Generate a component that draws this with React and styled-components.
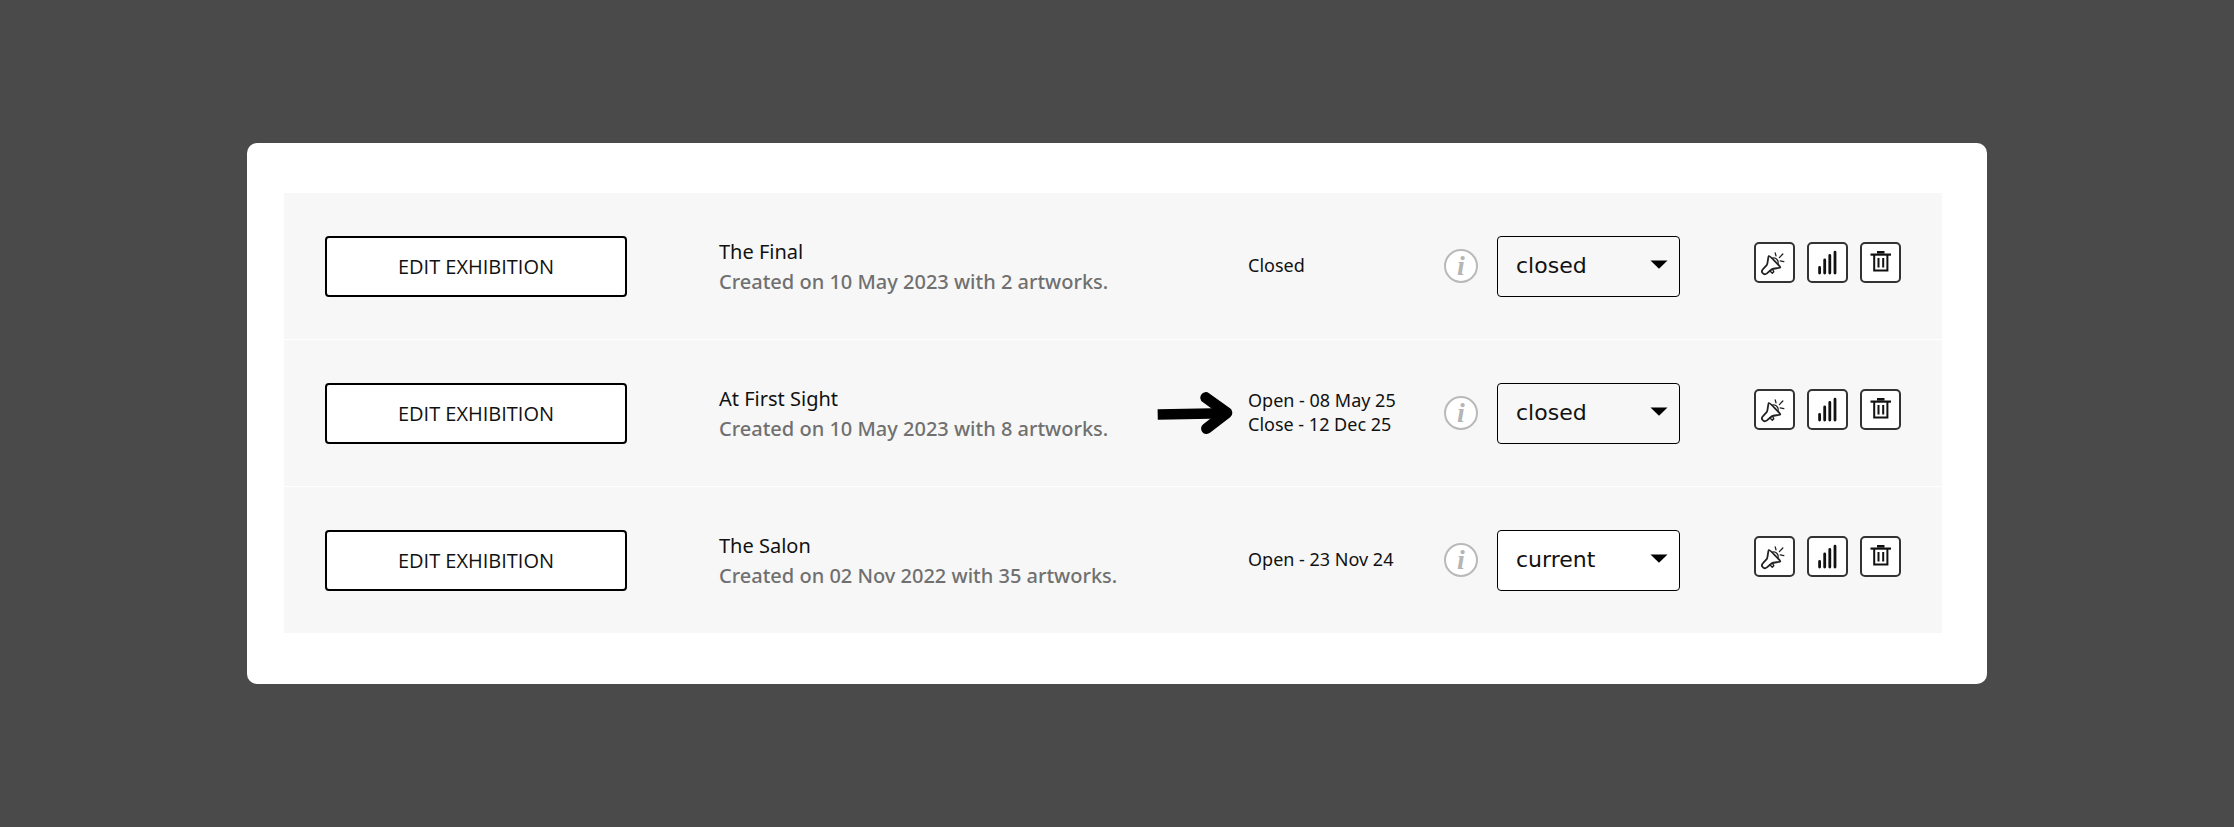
import React, { useState } from "react";
import styled, { createGlobalStyle } from "styled-components";

const exhibitions = [
  {
    id: 1,
    name: "The Final",
    created: "Created on 10 May 2023 with 2 artworks.",
    dates: ["Closed"],
    status: "closed",
  },
  {
    id: 2,
    name: "At First Sight",
    created: "Created on 10 May 2023 with 8 artworks.",
    dates: ["Open - 08 May 25", "Close - 12 Dec 25"],
    status: "closed",
    highlighted: true,
  },
  {
    id: 3,
    name: "The Salon",
    created: "Created on 02 Nov 2022 with 35 artworks.",
    dates: ["Open - 23 Nov 24"],
    status: "current",
  },
];

function ArrowIcon() {
  return (
    <svg width="76" height="46" viewBox="0 0 76 46" fill="none" stroke="#000" aria-hidden="true">
      <path d="M0.7 24.5L68 23.2" strokeWidth="10.5" />
      <path
        d="M48.8 7.6L69.8 22.8L49.6 38.5"
        strokeWidth="11"
        strokeLinecap="round"
        strokeLinejoin="round"
      />
    </svg>
  );
}

function MegaphoneIcon() {
  return (
    <svg
      width="37"
      height="37"
      viewBox="2 2 37 37"
      fill="none"
      stroke="#222"
      strokeWidth="1.8"
      strokeLinecap="round"
      strokeLinejoin="round"
      aria-hidden="true"
    >
      <path d="M14.8 14C15.6 13.6 26.6 24.6 26.3 25.5C26 26.2 19.5 26.3 17.8 27.2L12.9 31.4C11.5 32.5 9.6 32.2 8.6 31C7.6 29.8 7.7 28.3 9 27.1L12.9 22.9C14 20.8 14 14.6 14.8 14Z" />
      <path d="M15.8 28.8L18.3 31.2L19.8 29.7L18.6 27.4" strokeWidth="1.4" />
      <path d="M18.4 16.2C21.6 15 25 18.4 24.2 22" strokeWidth="1.3" />
      <path d="M21.2 10.8L22 13.8M28.8 12L25.4 15.6M26.2 18.8L29.8 19.7" strokeWidth="1.3" />
    </svg>
  );
}

function BarsIcon() {
  return (
    <svg
      width="37"
      height="37"
      viewBox="2 2 37 37"
      fill="none"
      stroke="#111"
      strokeWidth="2.8"
      strokeLinecap="round"
      aria-hidden="true"
    >
      <path d="M12.6 25.4V31M17.7 18V31M22.8 13.4V31M28 10.2V31" />
    </svg>
  );
}

function TrashIcon() {
  return (
    <svg width="37" height="37" viewBox="2 2 37 37" fill="none" stroke="#111" aria-hidden="true">
      <path d="M17 10.3H24.5" strokeWidth="2.6" />
      <path d="M10.5 12.6H31" strokeWidth="2.2" />
      <path d="M14.2 13V28.6H27.4V13" strokeWidth="2" />
      <path d="M18.5 16V25.6M23.2 16V25.6" strokeWidth="2" />
    </svg>
  );
}

function ExhibitionRow({ exhibition }) {
  const [status, setStatus] = useState(exhibition.status);

  return (
    <Row>
      <EditButton type="button">EDIT EXHIBITION</EditButton>
      <Details>
        <h2>{exhibition.name}</h2>
        <p>{exhibition.created}</p>
      </Details>
      <Pointer>{exhibition.highlighted && <ArrowIcon />}</Pointer>
      <Dates>
        {exhibition.dates.map((date) => (
          <span key={date}>{date}</span>
        ))}
      </Dates>
      <InfoButton type="button" aria-label="Status information">
        i
      </InfoButton>
      <SelectWrapper>
        <StatusSelect
          aria-label={exhibition.name + " status"}
          value={status}
          $current={status === "current"}
          onChange={(e) => setStatus(e.target.value)}
        >
          <option value="closed">closed</option>
          <option value="current">current</option>
        </StatusSelect>
        <SelectArrow viewBox="0 0 18 9" aria-hidden="true">
          <path d="M0.5 0.5H17.5L9 8.8Z" fill="#000" />
        </SelectArrow>
      </SelectWrapper>
      <Actions>
        <ActionButton type="button" aria-label="Promote">
          <MegaphoneIcon />
        </ActionButton>
        <ActionButton type="button" aria-label="Statistics">
          <BarsIcon />
        </ActionButton>
        <ActionButton type="button" aria-label="Delete">
          <TrashIcon />
        </ActionButton>
      </Actions>
    </Row>
  );
}

function App() {
  return (
    <Page>
      <GlobalStyle />
      <Card>
        <List>
          {exhibitions.map((exhibition) => (
            <ExhibitionRow key={exhibition.id} exhibition={exhibition} />
          ))}
        </List>
      </Card>
    </Page>
  );
}

export default App;

const GlobalStyle = createGlobalStyle`
  * {
    box-sizing: border-box;
  }
  body {
    margin: 0;
    background: #4a4a4a;
    color: #111;
    font-family: "Noto Sans", "Open Sans", sans-serif;
  }
`;

const Page = styled.main`
  display: flex;
  flex-direction: column;
  justify-content: center;
  min-height: 100vh;
  padding: 0 247px;
`;

const Card = styled.section`
  background: #fff;
  border-radius: 10px;
  padding: 50px 45px 51px 37px;
`;

const List = styled.ul`
  display: flex;
  flex-direction: column;
  gap: 1px;
  margin: 0;
  padding: 0;
  list-style: none;
`;

const Row = styled.li`
  display: grid;
  grid-template-columns: 302px 1fr 76px 211px 34px 202px 221px;
  align-items: center;
  min-height: 146px;
  padding: 0 41px;
  background: #f7f7f7;
`;

const EditButton = styled.button`
  height: 61px;
  border: 2px solid #000;
  border-radius: 4px;
  background: #fff;
  color: #111;
  font-family: "Open Sans", sans-serif;
  font-size: 20px;
  cursor: pointer;
`;

const Details = styled.div`
  padding-top: 2px;
  padding-left: 92px;
  font-size: 20px;
  line-height: 30px;
  h2 {
    margin: 0;
    font-size: inherit;
    font-weight: 400;
  }
  p {
    margin: 0;
    color: #707070;
    font-weight: 500;
  }
`;

const Pointer = styled.div`
  display: flex;
`;

const Dates = styled.div`
  display: flex;
  flex-direction: column;
  padding-bottom: 2px;
  padding-left: 15px;
  font-size: 18px;
  line-height: 24px;
`;

const InfoButton = styled.button`
  width: 34px;
  height: 34px;
  padding: 0;
  border: 2px solid #b9b9b9;
  border-radius: 50%;
  background: #fff;
  color: #b5b5b5;
  font-family: "Liberation Serif", serif;
  font-size: 28px;
  font-style: italic;
  font-weight: 700;
  line-height: 28px;
  cursor: pointer;
`;

const SelectWrapper = styled.div`
  position: relative;
  padding-left: 19px;
`;

const StatusSelect = styled.select`
  display: block;
  width: 100%;
  height: 61px;
  padding: 0 40px 2px 18px;
  border: 1px solid #000;
  border-radius: 4px;
  appearance: none;
  background: ${(props) => (props.$current ? "#fff" : "transparent")};
  color: #111;
  font-family: "DejaVu Sans", sans-serif;
  font-size: 22px;
`;

const SelectArrow = styled.svg`
  position: absolute;
  top: 24px;
  right: 12px;
  width: 18px;
  height: 9px;
  pointer-events: none;
`;

const Actions = styled.div`
  display: flex;
  justify-content: flex-end;
  gap: 12px;
  padding-bottom: 8px;
`;

const ActionButton = styled.button`
  display: grid;
  place-items: center;
  width: 41px;
  height: 41px;
  padding: 0;
  border: 2px solid #333;
  border-radius: 5px;
  background: #fff;
  cursor: pointer;
`;
